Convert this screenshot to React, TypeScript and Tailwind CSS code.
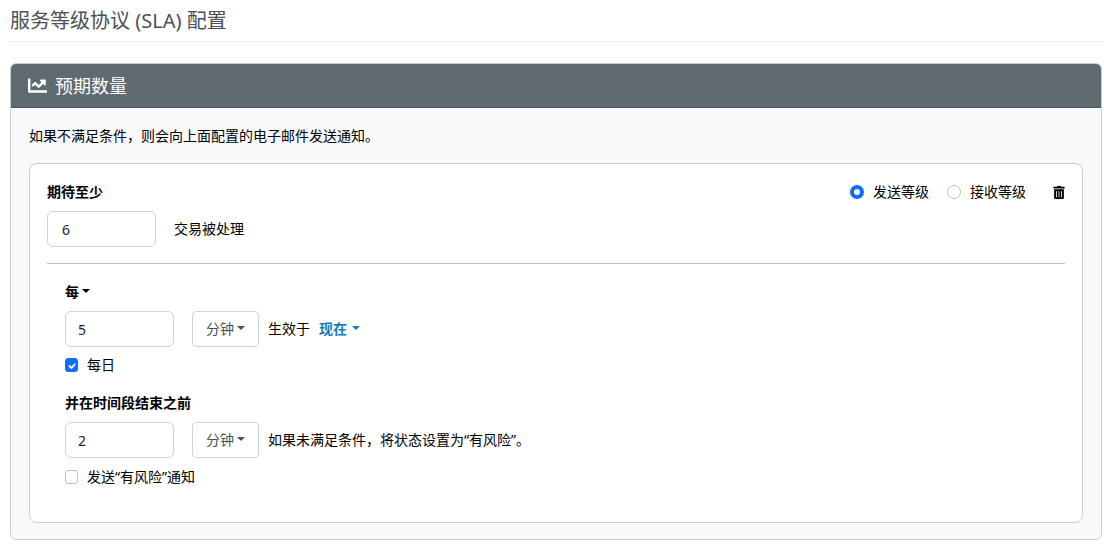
import { useState } from "react";
import type { ReactNode } from "react";
import { FaChartLine, FaTrashAlt } from "react-icons/fa";

const inputClass =
  "h-9 w-[109px] rounded-md border border-[#ced4da] bg-white text-sm text-[#212529] outline-none focus:border-[#0d6efd]";

function Caret() {
  return (
    <svg
      viewBox="0 0 8 4"
      className="pointer-events-none absolute right-0 top-1/2 h-1 w-2 -translate-y-[3px]"
      fill="currentColor"
      aria-hidden="true"
    >
      <path d="M0 0h8L4 4z" />
    </svg>
  );
}

function Dropdown({ label, options, className }: { label: string; options: string[]; className: string }) {
  return (
    <span className={`relative inline-flex items-center ${className}`}>
      <select aria-label={label} className="w-full appearance-none bg-transparent outline-none">
        {options.map((option) => (
          <option key={option}>{option}</option>
        ))}
      </select>
      <Caret />
    </span>
  );
}

function UnitSelect({ label }: { label: string }) {
  return (
    <span className="ml-[18px] flex h-9 w-[67px] items-center rounded border border-[#ced4da] px-[13px] text-[#495057]">
      <Dropdown label={label} options={["分钟", "小时", "天"]} className="w-full" />
    </span>
  );
}

function Check({ id, initial, children }: { id: string; initial: boolean; children: ReactNode }) {
  const [checked, setChecked] = useState(initial);
  return (
    <div className="flex h-5 items-center">
      <span className="relative flex">
        <input
          id={id}
          type="checkbox"
          checked={checked}
          onChange={(e) => setChecked(e.target.checked)}
          className="h-[14px] w-[13px] appearance-none rounded-[3px] border border-[#bfbfbf] bg-white checked:border-[#0d6efd] checked:bg-[#0d6efd]"
        />
        {checked && (
          <svg
            viewBox="0 0 13 14"
            className="pointer-events-none absolute inset-0 size-full"
            fill="none"
            stroke="white"
            strokeWidth="1.8"
            strokeLinecap="round"
            strokeLinejoin="round"
            aria-hidden="true"
          >
            <path d="M4.500 8l2 2 3.200-3.700" />
          </svg>
        )}
      </span>
      <label htmlFor={id} className="ml-[9px]">
        {children}
      </label>
    </div>
  );
}

function Radio({ id, defaultChecked, children }: { id: string; defaultChecked?: boolean; children: ReactNode }) {
  return (
    <div className="flex items-center">
      <input
        id={id}
        type="radio"
        name="level"
        defaultChecked={defaultChecked}
        className="size-[14px] appearance-none rounded-full border border-[#bfbfbf] bg-white checked:border-[4px] checked:border-[#0d6efd]"
      />
      <label htmlFor={id} className="ml-[9px]">
        {children}
      </label>
    </div>
  );
}

export default function App() {
  return (
    <main className="pr-[2px] pb-1 pl-[10px] font-['Noto_Sans','Noto_Sans_CJK_SC',sans-serif] text-sm leading-5 text-black">
      <h1 className="h-[42px] border-b border-[#e9ecef] pt-[7px] text-[20px] leading-7 font-normal text-[#495057]">
        服务等级协议 (SLA) 配置
      </h1>

      <section className="mt-[21px] overflow-hidden rounded-md border border-[#cccdce] bg-[#f8f9fb]">
        <header className="flex h-11 items-center border-b border-[#4b565b] bg-[#5f6b70] px-[17px] text-white">
          <FaChartLine className="size-[19px]" aria-hidden="true" />
          <h2 className="ml-2 text-[18px] leading-6 font-normal">预期数量</h2>
        </header>

        <div className="px-[18px] pt-[18px] pb-4">
          <p>如果不满足条件，则会向上面配置的电子邮件发送通知。</p>

          <div className="mt-[17px] rounded-lg border border-[#cccdce] bg-white px-[17px] pt-[18px] pb-[35px]">
            <div className="flex items-center justify-between">
              <label htmlFor="expected" className="font-bold">
                期待至少
              </label>
              <div className="flex items-center">
                <div className="flex gap-[18px]">
                  <Radio id="send" defaultChecked>
                    发送等级
                  </Radio>
                  <Radio id="receive">接收等级</Radio>
                </div>
                <button type="button" aria-label="删除" className="ml-[27px]">
                  <FaTrashAlt className="h-[13px] w-3" />
                </button>
              </div>
            </div>
            <div className="mt-[9px] flex items-center">
              <input id="expected" type="text" inputMode="numeric" defaultValue="6" className={`${inputClass} px-[14px]`} />
              <span className="ml-[18px]">交易被处理</span>
            </div>

            <hr className="mt-4 border-t border-[#bfbfbf]" />

            <div className="px-[18px] pt-[18px]">
              <Dropdown label="频率" options={["每"]} className="w-[25px] font-bold" />
              <div className="mt-[9px] flex items-center">
                <input
                  type="text"
                  inputMode="numeric"
                  aria-label="周期"
                  defaultValue="5"
                  className={`${inputClass} px-3`}
                />
                <UnitSelect label="周期单位" />
                <span className="ml-[9px]">生效于</span>
                <Dropdown label="生效时间" options={["现在"]} className="ml-[9px] w-[41px] font-bold text-[#1779ba]" />
              </div>
              <div className="mt-2">
                <Check id="daily" initial>
                  每日
                </Check>
              </div>

              <label htmlFor="risk" className="mt-[18px] block font-bold">
                并在时间段结束之前
              </label>
              <div className="mt-[9px] flex items-center">
                <input
                  id="risk"
                  type="text"
                  inputMode="numeric"
                  defaultValue="2"
                  className={`${inputClass} px-3`}
                />
                <UnitSelect label="风险单位" />
                <span className="ml-[9px]">如果未满足条件，将状态设置为“有风险”。</span>
              </div>
              <div className="mt-[9px]">
                <Check id="notify" initial={false}>
                  发送“有风险”通知
                </Check>
              </div>
            </div>
          </div>
        </div>
      </section>
    </main>
  );
}
